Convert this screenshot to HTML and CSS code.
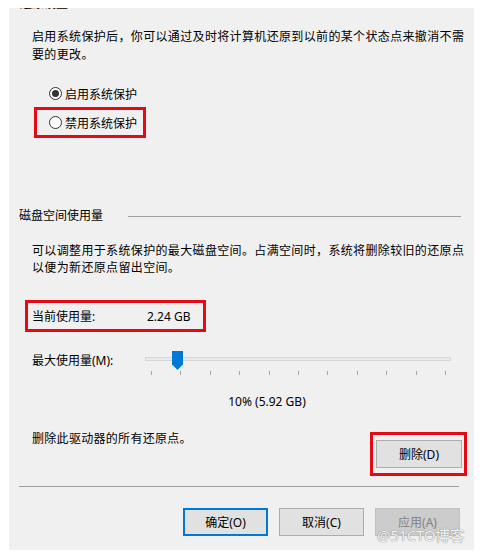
FILE: index.html
```html
<!DOCTYPE html>
<html lang="zh-CN">
<head>
<meta charset="utf-8">
<title>系统保护</title>
<link rel="stylesheet" href="styles.css">
</head>
<body>
<div class="panel">
  <div class="group-title">还原设置</div>
  <p class="desc desc-top">启用系统保护后，你可以通过及时将计算机还原到以前的某个状态点来撤消不需<br>要的更改。</p>

  <div class="radios">
    <label class="radio-row">
      <span class="radio checked"></span><span class="radio-text">启用系统保护</span>
    </label>
    <label class="radio-row marked">
      <span class="radio"></span><span class="radio-text">禁用系统保护</span>
    </label>
  </div>

  <div class="section-head">
    <span class="section-title">磁盘空间使用量</span>
    <span class="section-line"></span>
  </div>

  <p class="desc desc-disk">可以调整用于系统保护的最大磁盘空间。占满空间时，系统将删除较旧的还原点<br>以便为新还原点留出空间。</p>

  <div class="usage marked">
    <span class="usage-label">当前使用量:</span>
    <span class="usage-value">2.24 GB</span>
  </div>

  <div class="slider-row">
    <span class="slider-label">最大使用量(M):</span>
    <div class="slider">
      <div class="track"></div>
      <div class="thumb"></div>
      <div class="ticks">
        <i></i><i></i><i></i><i></i><i></i><i></i><i></i><i></i><i></i><i></i><i></i>
      </div>
    </div>
  </div>

  <div class="percent">10% (5.92 GB)</div>

  <div class="delete-row">
    <span class="delete-text">删除此驱动器的所有还原点。</span>
    <div class="delete-box marked">
      <button class="btn">删除(D)</button>
    </div>
  </div>

  <div class="separator"></div>

  <div class="actions">
    <button class="btn btn-default">确定(O)</button>
    <button class="btn">取消(C)</button>
    <button class="btn btn-disabled">应用(A)</button>
  </div>

  <div class="watermark">@51CTO博客</div>
</div>
</body>
</html>
```

FILE: styles.css
```css
* { box-sizing: border-box; }

html, body {
  margin: 0;
  padding: 0;
  background: #ffffff;
}

body {
  font-family: "Noto Sans", "Noto Sans CJK SC", sans-serif;
  font-size: 12px;
  color: #000;
}

.panel {
  position: relative;
  width: 465px;
  height: 542px;
  margin: 8px 0 0 9px;
  background: #f0f0f0;
  overflow: hidden;
}

.group-title {
  margin-top: -12px;
  padding-left: 11px;
  line-height: 16px;
  height: 16px;
}

.desc {
  margin: 0;
  padding-left: 23px;
  line-height: 18px;
  letter-spacing: 0.35px;
}

.desc-top { margin-top: 16px; }

.radios {
  margin: 14px 0 0 25px;
  display: flex;
  flex-direction: column;
  align-items: flex-start;
}

.radio-row {
  display: flex;
  align-items: center;
  width: 112px;
  height: 31px;
  padding-left: 12px;
  border: 3px solid transparent;
}
.radio-row + .radio-row { margin-top: -2px; }

.marked { border: 3px solid #e50914; }

.radio {
  width: 13px;
  height: 13px;
  border: 1px solid #333;
  border-radius: 50%;
  background: #fff;
  display: flex;
  align-items: center;
  justify-content: center;
  flex: none;
}
.radio.checked::after {
  content: "";
  width: 7px;
  height: 7px;
  border-radius: 50%;
  background: #333;
}
.radio-text { margin-left: 3px; }

.section-head {
  margin-top: 69px;
  padding: 0 13px 0 10px;
  display: flex;
  align-items: center;
  line-height: 18px;
}
.section-line {
  flex: 1;
  height: 1px;
  background: #a0a0a0;
  margin-left: 25px;
  margin-top: 1px;
}

.desc-disk { margin-top: 17px; line-height: 17px; }

.usage {
  margin: 24px 0 0 16px;
  width: 181px;
  height: 32px;
  display: grid;
  grid-template-columns: 115px auto;
  align-items: center;
  padding-left: 4px;
}

.slider-row {
  margin-top: 19px;
  padding-left: 23px;
  display: grid;
  grid-template-columns: 113px 306px;
  align-items: start;
}
.slider-label {
  margin-top: 1px;
  line-height: 18px;
}
.slider { position: relative; height: 24px; }
.track {
  margin-top: 6px;
  height: 4px;
  border: 1px solid #d6d6d6;
  background: #e7eaea;
}
.thumb {
  position: absolute;
  left: 27px;
  top: 0;
  width: 11px;
  height: 19px;
  background: #0078d7;
  clip-path: polygon(0 0, 100% 0, 100% 70%, 50% 100%, 0 70%);
}
.ticks {
  margin-top: 10px;
  padding: 0 5px 0 6px;
  display: flex;
  justify-content: space-between;
}
.ticks i {
  display: block;
  width: 1px;
  height: 4px;
  background: #a6a6a6;
}

.percent {
  margin-top: 18px;
  padding-left: 51px;
  text-align: center;
  line-height: 18px;
}

.delete-row {
  margin-top: 19px;
  padding: 0 7px 0 23px;
  display: flex;
  justify-content: space-between;
  align-items: flex-start;
}
.delete-text { line-height: 18px; letter-spacing: 0.3px; }
.delete-box {
  margin-top: 2px;
  padding: 5px 2px 5px 3px;
}

.btn {
  font: inherit;
  font-size: 12px;
  width: 85px;
  height: 28px;
  padding: 0;
  background: #e1e1e1;
  border: 1px solid #adadad;
  color: #000;
}
.delete-box .btn { width: 86px; }

.btn-default { border: 2px solid #0078d7; }

.btn-disabled {
  background: #cccccc;
  border-color: #bfbfbf;
  color: #838383;
}

.separator {
  margin: 10px 15px 0 10px;
  height: 1px;
  background: #a0a0a0;
}

.actions {
  margin-top: 21px;
  padding-right: 14px;
  display: flex;
  justify-content: flex-end;
  gap: 11px;
}

.watermark {
  position: absolute;
  left: 368px;
  top: 516px;
  font-size: 15px;
  color: rgba(255, 255, 255, 0.9);
  text-shadow: 0 0 1px #8a8a8a, 0 0 1px #8a8a8a;
  letter-spacing: -0.3px;
}
```
